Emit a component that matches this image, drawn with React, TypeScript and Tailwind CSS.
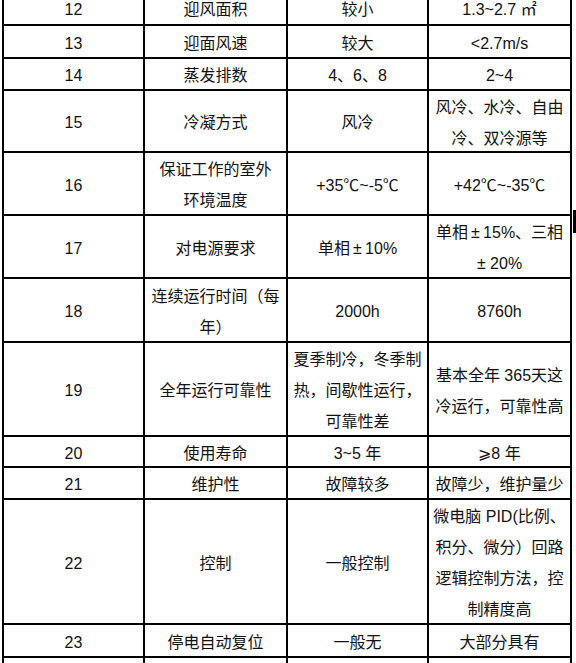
const rows: { h: string; cells: string[][] }[] = [
  { h: "h-[34px] -mt-[8px]", cells: [["12"], ["迎风面积"], ["较小"], ["1.3~2.7 ㎡"]] },
  { h: "h-[33px]", cells: [["13"], ["迎面风速"], ["较大"], ["<2.7m/s"]] },
  { h: "h-[32px]", cells: [["14"], ["蒸发排数"], ["4、6、8"], ["2~4"]] },
  { h: "h-[62px]", cells: [["15"], ["冷凝方式"], ["风冷"], ["风冷、水冷、自由", "冷、双冷源等"]] },
  { h: "h-[63px]", cells: [["16"], ["保证工作的室外", "环境温度"], ["+35℃~-5℃"], ["+42℃~-35℃"]] },
  { h: "h-[63px]", cells: [["17"], ["对电源要求"], ["单相 ± 10%"], ["单相 ± 15%、三相", "± 20%"]] },
  { h: "h-[64px]", cells: [["18"], ["连续运行时间（每", "年）"], ["2000h"], ["8760h"]] },
  {
    h: "h-[94px]",
    cells: [["19"], ["全年运行可靠性"], ["夏季制冷，冬季制", "热，间歇性运行，", "可靠性差"], ["基本全年 365天这", "冷运行，可靠性高"]],
  },
  { h: "h-[31px]", cells: [["20"], ["使用寿命"], ["3~5 年"], ["⩾8 年"]] },
  { h: "h-[32px]", cells: [["21"], ["维护性"], ["故障较多"], ["故障少，维护量少"]] },
  {
    h: "h-[125px]",
    cells: [["22"], ["控制"], ["一般控制"], ["微电脑 PID(比例、", "积分、微分）回路", "逻辑控制方法，控", "制精度高"]],
  },
  { h: "h-[33px]", cells: [["23"], ["停电自动复位"], ["一般无"], ["大部分具有"]] },
  { h: "h-[40px]", cells: [[""], [""], [""], [""]] },
];

const widths = ["w-[141px] border-r-2", "w-[143px] border-r-2", "w-[141px] border-r-2", "w-[143px] border-r-2"];

export default function App() {
  return (
    <div
      className="relative h-[663px] w-[576px] overflow-hidden bg-white text-[16px] leading-[31px] text-[#111]"
      style={{ fontFamily: '"Liberation Sans", "Noto Sans CJK SC", sans-serif' }}
    >
      <div className="ml-[2px] w-[570px] border-l-2 border-black">
        {rows.map((row, i) => (
          <div key={i} className={`flex border-b-2 border-black ${row.h}`}>
            {row.cells.map((lines, j) => (
              <div
                key={j}
                className={`flex flex-col items-center justify-center border-black pt-[3px] text-center whitespace-pre ${widths[j]}`}
              >
                {lines.map((t, k) => (
                  <span key={k}>{t.replace(/ ± /g, "\u2009±\u2009")}</span>
                ))}
              </div>
            ))}
          </div>
        ))}
      </div>
      <div className="absolute left-[573px] top-[210px] h-[23px] w-[3px] bg-black" />
    </div>
  );
}
